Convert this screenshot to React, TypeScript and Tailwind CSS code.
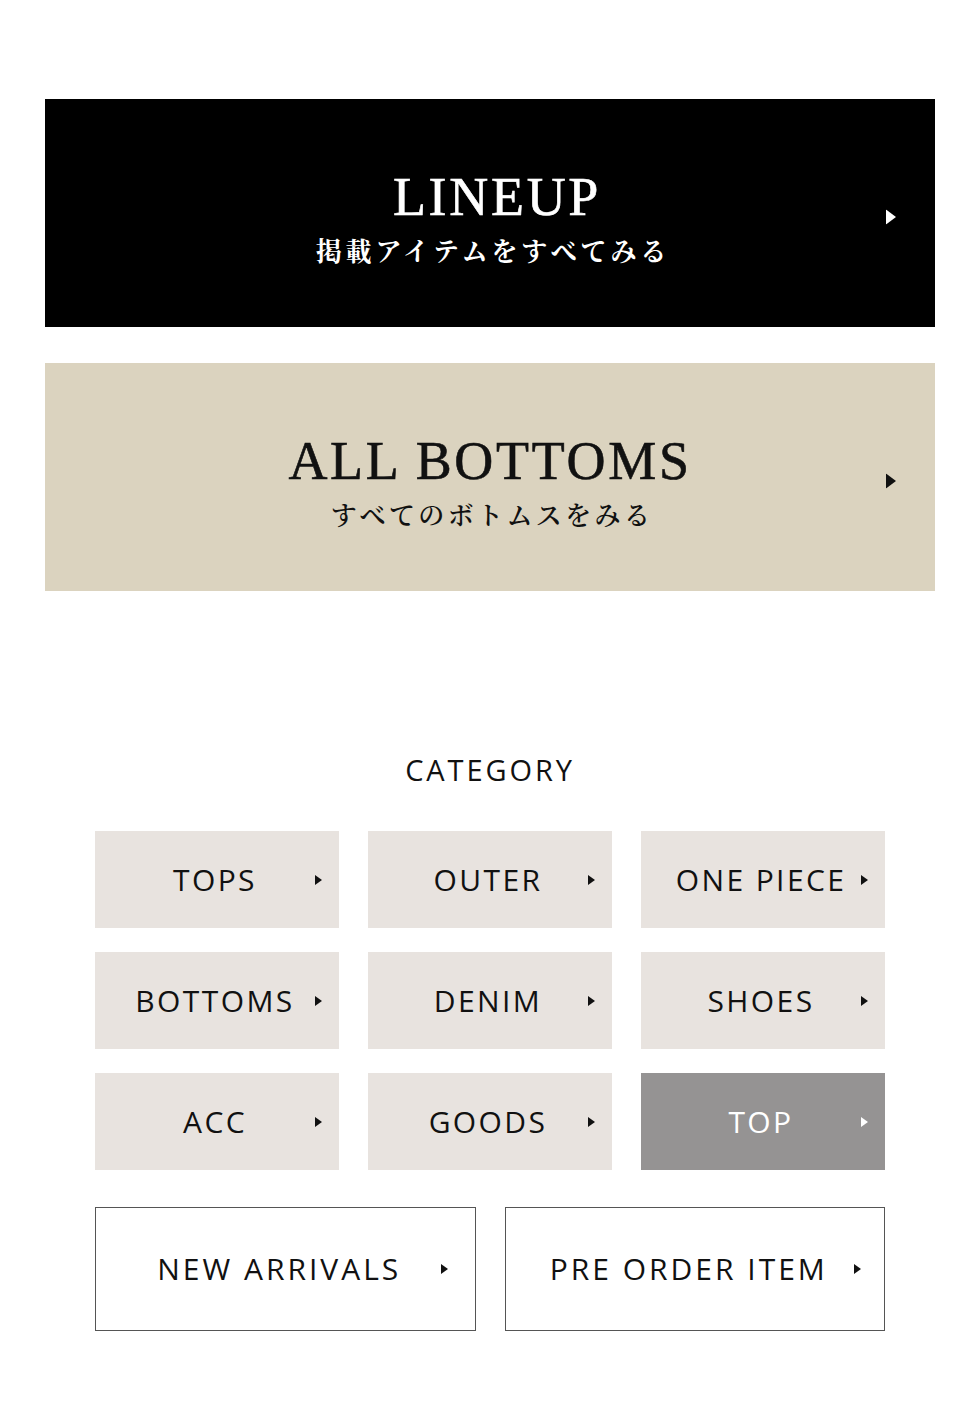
import React from "react";

const serif = { fontFamily: '"Liberation Serif", "Noto Serif CJK JP", serif' };
const jp = { fontFamily: '"Noto Serif CJK JP", "Noto Sans CJK JP", serif' };
const sans = { fontFamily: '"Open Sans", "Noto Sans", "Noto Sans CJK JP", sans-serif' };

function Tri({ w, h, color }: { w: number; h: number; color: string }) {
  return (
    <svg width={w} height={h} viewBox={`0 0 ${w} ${h}`}>
      <polygon points={`0,0 ${w},${h / 2} 0,${h}`} fill={color} />
    </svg>
  );
}

function Banner({ title, sub, dark }: { title: string; sub: string; dark: boolean }) {
  return (
    <a
      className={
        "relative flex h-[228px] w-full flex-col items-center justify-center pt-[6px] " +
        (dark ? "bg-black text-white" : "bg-[#dbd3bf] text-[#111]")
      }
    >
      <div
        className={
          "text-[54px] leading-[62px] tracking-[0.05em] [-webkit-text-stroke:0.6px_currentColor] " +
          (dark ? "pl-[14px]" : "")
        }
        style={serif}
      >
        {title}
      </div>
      <div
        className={
          "mt-[6px] text-[26px] leading-[32px] " +
          (dark ? "font-bold tracking-[0.15em] pl-[6px]" : "font-semibold tracking-[0.13em] pl-[4px]")
        }
        style={jp}
      >
        {sub}
      </div>
      <span className="absolute right-[39px] top-1/2 -translate-y-1/2 pt-[8px]">
        <Tri w={10} h={15} color={dark ? "#fff" : "#111"} />
      </span>
    </a>
  );
}

function Cell({ label, active }: { label: string; active?: boolean }) {
  return (
    <a
      className={
        "relative flex h-[97px] items-center justify-center pr-[4px] " +
        (active ? "bg-[#959393] text-white" : "bg-[#e8e3df] text-[#111]")
      }
    >
      <span className="text-[30px] leading-none tracking-[0.08em]" style={sans}>
        {label}
      </span>
      <span className="absolute right-[17px] top-1/2 -translate-y-1/2 flex">
        <Tri w={7} h={10} color={active ? "#fff" : "#111"} />
      </span>
    </a>
  );
}

function Outline({ label, right }: { label: string; right: string }) {
  return (
    <a className="relative flex h-[124px] items-center justify-center border border-[#555] pr-[12px] text-[#111]">
      <span className="text-[30px] leading-none tracking-[0.1em]" style={sans}>
        {label}
      </span>
      <span className={"absolute top-1/2 -translate-y-1/2 flex " + right}>
        <Tri w={7} h={10} color="#111" />
      </span>
    </a>
  );
}

export default function App() {
  return (
    <div className="min-h-[1409px] w-full bg-white px-[45px] pt-[99px]">
      <Banner title="LINEUP" sub="掲載アイテムをすべてみる" dark />
      <div className="mt-[36px]">
        <Banner title="ALL BOTTOMS" sub="すべてのボトムスをみる" dark={false} />
      </div>
      <div className="px-[50px]">
        <div
          className="mt-[159px] flex h-[40px] items-center justify-center text-[29px] tracking-[0.1em] text-[#111]"
          style={sans}
        >
          CATEGORY
        </div>
        <div className="mt-[41px] grid grid-cols-3 gap-x-[29px] gap-y-[24px]">
          <Cell label="TOPS" />
          <Cell label="OUTER" />
          <Cell label="ONE PIECE" />
          <Cell label="BOTTOMS" />
          <Cell label="DENIM" />
          <Cell label="SHOES" />
          <Cell label="ACC" />
          <Cell label="GOODS" />
          <Cell label="TOP" active />
        </div>
        <div className="mt-[37px] grid grid-cols-2 gap-x-[29px]">
          <Outline label="NEW ARRIVALS" right="right-[27px]" />
          <Outline label="PRE ORDER ITEM" right="right-[23px]" />
        </div>
      </div>
    </div>
  );
}
